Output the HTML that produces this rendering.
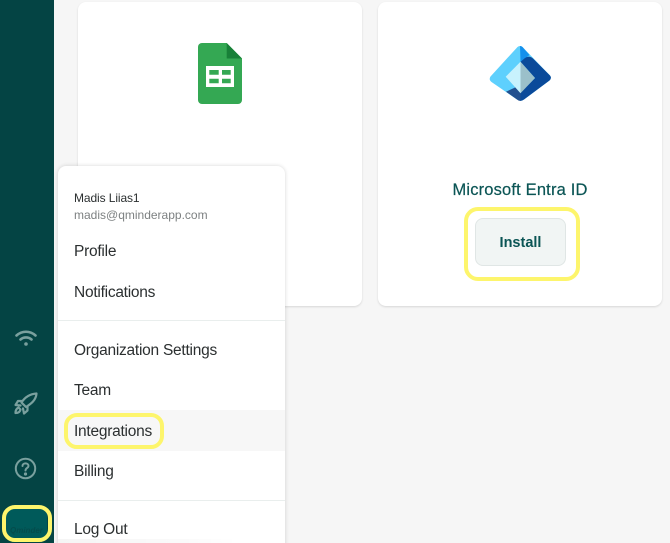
<!DOCTYPE html>
<html><head><meta charset="utf-8"><style>
html,body{margin:0;padding:0;width:670px;height:543px;overflow:hidden;background:#f6f6f6;font-family:"Liberation Sans",sans-serif}
#w{position:relative;width:670px;height:543px;overflow:hidden;background:#f6f6f6}
.a{position:absolute}
.card{position:absolute;top:2px;width:284px;height:304px;background:#fff;border-radius:8px;box-shadow:0 1px 2px rgba(0,0,0,.13)}
.t{position:absolute;white-space:nowrap;color:#2b2f30;font-size:15.500px;line-height:18px;left:74px;letter-spacing:-.25px}
.y{position:absolute;border:4px solid #fdf56c;border-radius:13px;box-sizing:border-box}
</style></head><body><div id="w">
<div class="a" style="left:0;top:0;width:54px;height:543px;background:#044444"></div>
<div class="card" style="left:78px"></div>
<div class="card" style="left:378px"></div>

<svg class="a" style="left:198px;top:43px" width="44" height="61" viewBox="0 0 44 61">
<path d="M4 0H28.700L44 15.500V57a4 4 0 0 1-4 4H4a4 4 0 0 1-4-4V4a4 4 0 0 1 4-4z" fill="#34a853"/>
<path d="M28.700 0L44 15.500H28.700z" fill="#188038"/>
<path d="M8 23H36V44H8z" fill="#fff"/>
<path d="M11.300 27H20.700V31.700H11.300zM24 27H32.700V31.700H24zM11.300 35.700H20.700V40.300H11.300zM24 35.700H32.700V40.300H24z" fill="#34a853"/>
</svg>

<svg class="a" style="left:489px;top:46px" width="63" height="56" viewBox="0 0 63 56">
<path d="M28.500 1Q31 -1 33.500 1L61 29.500Q63 32 60.500 34.500L35 53.500Q31.500 56 28 53.500L2.500 36Q-.5 33.500 1.500 30.500z" fill="#5ed0fd"/>
<path d="M31 0Q32.500 0 33.500 1L40.500 9L31.500 15.700z" fill="#1490ec"/>
<path d="M31.500 15.700L36 12Q40 9 44 12.500L61 29.500Q63 32 60.500 34.500L35 53.500Q33 55 31 55V47.300L46 32z" fill="#0a4a9a"/>
<path d="M17 45.700L31.500 39V55Q29.500 55 28 53.500z" fill="#23508f"/>
<path d="M31.500 15.700L46 32L31.500 47.300z" fill="#9bc0ca"/>
<path d="M31.500 15.700L16.700 30.700L31.500 47.300z" fill="#c8f2fd"/>
</svg>

<div class="a" style="left:378px;width:284px;top:180px;text-align:center;font-size:16.500px;line-height:20px;color:#0b5555;letter-spacing:.17px;-webkit-text-stroke:.2px #0b5555">Microsoft Entra ID</div>
<div class="a" style="left:475px;top:218px;width:91px;height:48px;box-sizing:border-box;background:#f1f5f4;border:1px solid #e0e6e5;border-radius:8px;text-align:center;line-height:49px;font-size:14.500px;font-weight:bold;color:#0b5555">Install</div>
<div class="y" style="left:464px;top:207px;width:116px;height:74px;border-radius:14px"></div>

<div class="a" style="left:58px;top:166px;width:227px;height:390px;background:#fff;border-radius:8px;box-shadow:0 0 4px rgba(0,0,0,.16)"></div>
<div class="a" style="left:58px;top:320px;width:227px;height:1px;background:#e9eeed"></div>
<div class="a" style="left:58px;top:500px;width:227px;height:1px;background:#e9eeed"></div>
<div class="a" style="left:58px;top:410px;width:227px;height:41px;background:#f7f7f7"></div>
<div class="a" style="left:58px;top:539px;width:180px;height:4px;background:linear-gradient(90deg,rgba(0,0,0,.04),rgba(0,0,0,.02) 70%,rgba(0,0,0,0))"></div>

<div class="t" style="top:189px;font-size:12px;letter-spacing:-.1px">Madis Liias1</div>
<div class="t" style="top:206px;font-size:12px;color:#7d8182;letter-spacing:0">madis@qminderapp.com</div>
<div class="t" style="top:243px">Profile</div>
<div class="t" style="top:284px">Notifications</div>
<div class="t" style="top:342px">Organization Settings</div>
<div class="t" style="top:382px">Team</div>
<div class="t" style="top:423px">Integrations</div>
<div class="t" style="top:463px">Billing</div>
<div class="t" style="top:521px">Log Out</div>
<div class="y" style="left:64px;top:413px;width:100px;height:36px"></div>

<svg class="a" style="left:14px;top:328px" width="24" height="20" viewBox="0 0 24 20" fill="none" stroke="#7aa09e" stroke-width="2.600" stroke-linecap="round">
<path d="M2.500 7.500C8 2.500 16 2.500 21.500 7.500"/><path d="M6.500 11.500C9.500 8.800 14.500 8.800 17.500 11.500"/><circle cx="12" cy="16" r="1.200" fill="#7aa09e" stroke-width="1.200"/>
</svg>
<svg class="a" style="left:13px;top:391px" width="25" height="25" viewBox="0 0 25 25" fill="none" stroke="#7aa09e" stroke-width="2.200" stroke-linejoin="round" stroke-linecap="round">
<path d="M23.500 2.500C17 3 12 6 8.500 11.500L13 16C18.500 12.500 23 9 23.500 2.500z"/><path d="M8.500 10H5L2.500 14L7.500 14.500"/><path d="M14.500 15.500V19.500L11 22.500L10 17.500"/><path d="M5.500 16.500C3.500 17.500 2.500 19.500 2.500 22C5 22 7 21 7.500 18.500z"/>
</svg>
<svg class="a" style="left:14px;top:457px" width="23" height="23" viewBox="0 0 23 23" fill="none" stroke="#7aa09e" stroke-width="2" stroke-linecap="round">
<circle cx="11.500" cy="11.500" r="9.700"/><path d="M8.500 9C8.500 5.500 14.500 5.500 14.500 9C14.500 11 11.500 11 11.500 13.500"/><circle cx="11.500" cy="17" r=".6" fill="#7aa09e"/>
</svg>

<div class="a" style="left:5px;top:508px;width:42px;height:30px;background:#005a5a;border-radius:6px"></div>
<div class="a" style="left:10px;top:526px;font-size:8px;line-height:10px;font-style:italic;font-weight:bold;color:#044c4c">Qminder</div>
<div class="y" style="left:2px;top:505px;width:50px;height:37px;border-width:4px"></div>
</div></body></html>
